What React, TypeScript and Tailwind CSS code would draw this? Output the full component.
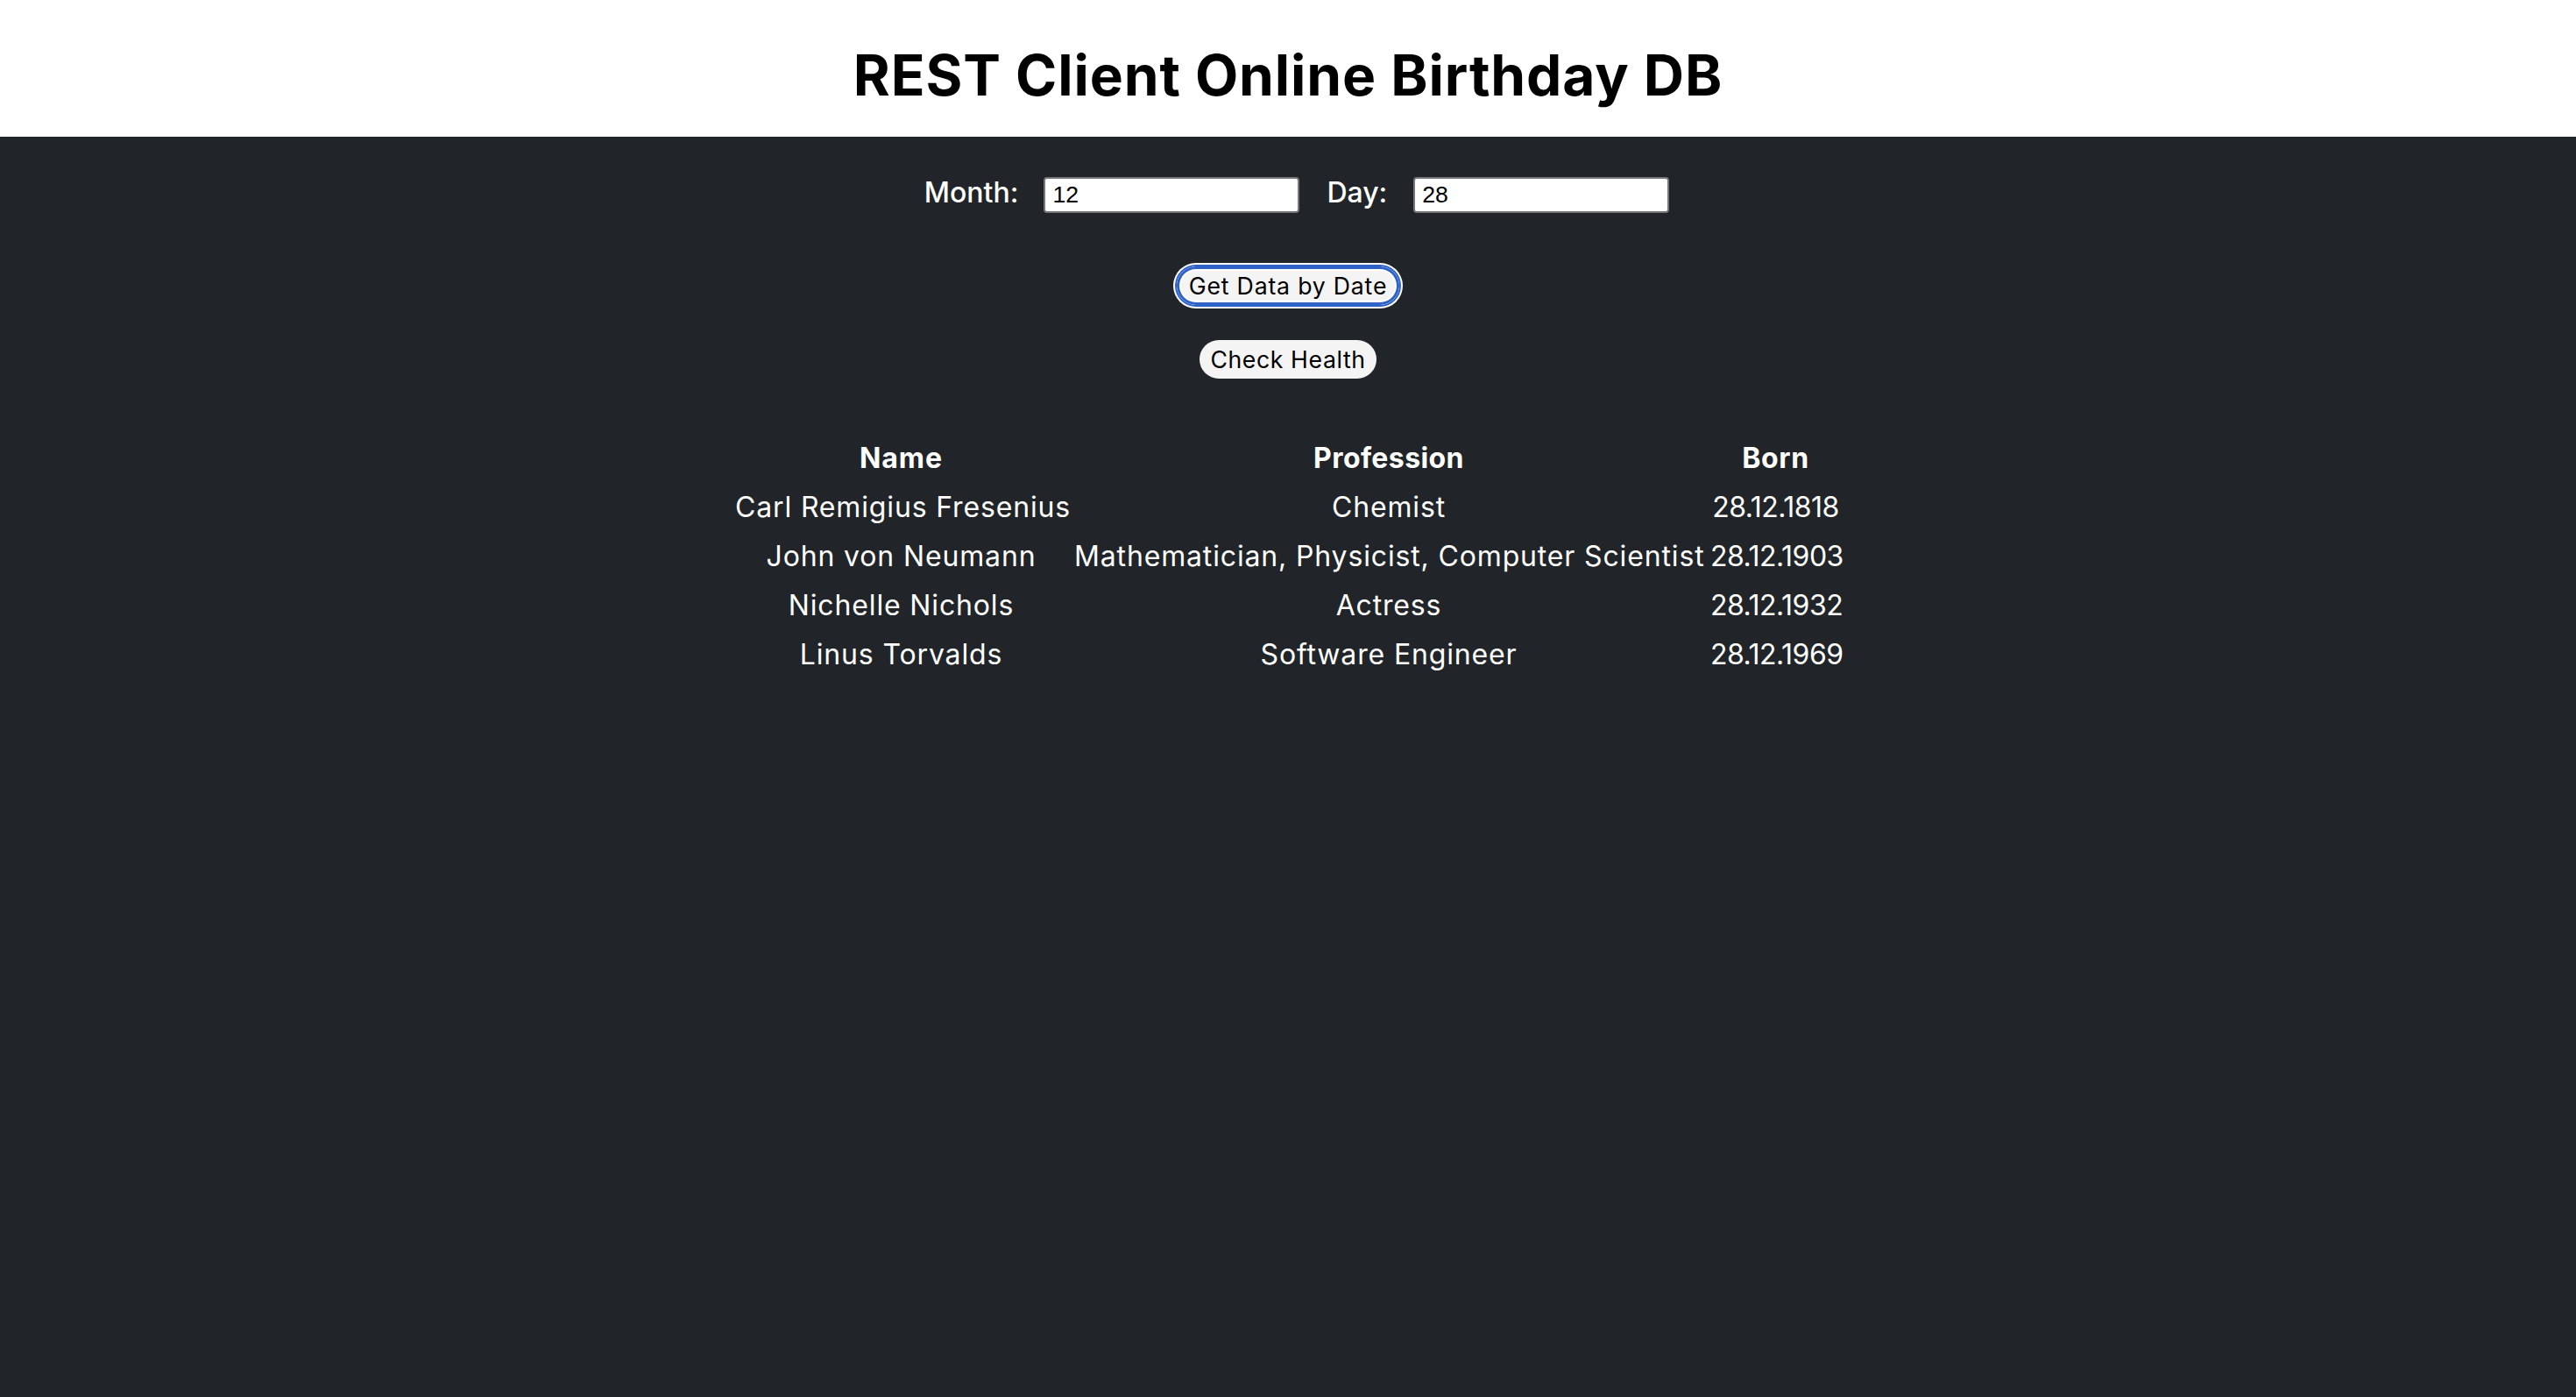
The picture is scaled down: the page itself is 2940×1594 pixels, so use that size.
import { useState } from "react";

type Person = {
  name: string;
  profession: string;
  born: string;
};

const people: Person[] = [
  { name: "Carl Remigius Fresenius", profession: "Chemist", born: "28.12.1818" },
  {
    name: "John von Neumann",
    profession: "Mathematician, Physicist, Computer Scientist",
    born: "28.12.1903",
  },
  { name: "Nichelle Nichols", profession: "Actress", born: "28.12.1932" },
  { name: "Linus Torvalds", profession: "Software Engineer", born: "28.12.1969" },
];

export default function App() {
  const [month, setMonth] = useState("12");
  const [day, setDay] = useState("28");

  return (
    <div className="min-h-screen bg-[#212529] font-['Inter','Liberation_Sans',sans-serif] text-white">
      <header className="h-[156px] bg-white pt-[54px]">
        <h1 className="text-center text-[64px] leading-[64px] font-bold tracking-[0.9px] text-black">
          REST Client Online Birthday DB
        </h1>
      </header>

      <main className="flex flex-col items-center">
        <div className="mt-[46px] flex h-[41px] items-center pl-[20px]">
          <label className="mb-[6px] mr-[29px] text-[32px] leading-[35px] font-medium">
            Month:
          </label>
          <input
            value={month}
            onChange={(e) => setMonth(e.target.value)}
            className="mr-[31px] h-[41px] w-[292px] rounded-[4px] border-2 border-[#767676] bg-white pl-[8px] font-['Liberation_Sans',Arial,sans-serif] text-[26.67px] text-black"
          />
          <label className="mb-[6px] mr-[30px] text-[32px] leading-[35px] font-medium">
            Day:
          </label>
          <input
            value={day}
            onChange={(e) => setDay(e.target.value)}
            className="h-[41px] w-[292px] rounded-[4px] border-2 border-[#767676] bg-white pl-[8px] font-['Liberation_Sans',Arial,sans-serif] text-[26.67px] text-black"
          />
        </div>

        <button className="mt-[61px] h-[44px] w-[254px] rounded-full bg-[#f4f4f4] text-[26.67px] tracking-[0.8px] text-black shadow-[inset_0_0_0_3px_#2f62c6,inset_0_0_0_5px_#fff,0_0_0_2px_#2f62c6,0_0_0_4px_#fff]">
          Get Data by Date
        </button>

        <button className="mt-[40px] h-[44px] w-[202px] rounded-full bg-[#f4f4f4] text-[26.67px] tracking-[0.6px] text-black">
          Check Health
        </button>

        <table className="mt-[61px] w-[1274px] table-fixed border-separate border-spacing-[4px] text-center text-[32px] leading-[48px]">
          <thead>
            <tr>
              <th className="w-[383px] p-[2px] font-bold tracking-[1px]">Name</th>
              <th className="w-[722px] p-[2px] font-bold tracking-[0.4px]">Profession</th>
              <th className="w-[153px] p-[2px] font-bold tracking-[0.6px]">Born</th>
            </tr>
          </thead>
          <tbody>
            {people.map((p) => (
              <tr key={p.name}>
                <td className="p-[2px] whitespace-nowrap tracking-[0.85px]">{p.name}</td>
                <td className="p-[2px] whitespace-nowrap tracking-[0.85px]">{p.profession}</td>
                <td className="p-[2px] whitespace-nowrap tracking-[-0.5px]">{p.born}</td>
              </tr>
            ))}
          </tbody>
        </table>
      </main>
    </div>
  );
}
